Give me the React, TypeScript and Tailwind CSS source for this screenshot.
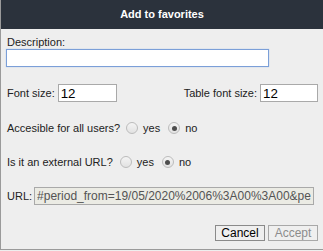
import React from 'react';

function Radio({ checked = false }: { checked?: boolean }) {
    return (
        <span className="flex h-[12px] w-[12px] items-center justify-center rounded-full border border-[#bcbcbc] bg-gradient-to-b from-[#f4f4f4] to-[#e2e2e2]">
            {checked && <span className="h-[5px] w-[5px] rounded-full bg-[#4d4d4d]" />}
        </span>
    );
}

function YesNo({ label, labelGap }: { label: string, labelGap: string }) {
    return (
        <div className="flex h-[18px] items-center">
            <span className="pl-px">{label}</span>
            <span className={`${labelGap} flex items-center`}>
                <Radio />
                <span className="ml-[5px]">yes</span>
            </span>
            <span className="ml-[8px] flex items-center">
                <Radio checked />
                <span className="ml-[5px]">no</span>
            </span>
        </div>
    );
}

export default function App() {
    const field = 'h-[18px] border border-[#a9a9a9] bg-white px-[2px] text-[13.33px] leading-[16px] text-black outline-none';

    return (
        <div className="h-[251px] w-[323px] overflow-hidden bg-[#eeeeee] font-['Liberation_Sans',Arial,sans-serif]">
            <div className="flex h-[250px] flex-col border-b border-l border-[#9a9a9a] bg-[#eeeeee] text-[11px] leading-[13px] text-[#222]">
                <div className="flex h-[29px] shrink-0 items-center justify-center bg-[#2b323c] text-[11px] font-bold text-white">
                    Add to favorites
                </div>

                <div className="flex flex-col px-[5px] pt-[7px]">
                    <label className="pl-px">Description:</label>
                    <input
                        className="h-[18px] w-[263px] border border-[#7b9fd8] bg-white px-[2px] text-[13.33px] shadow-[0_0_1px_#9fbbe6] outline-none"
                        defaultValue=""
                    />

                    <div className="mt-[17px] flex h-[18px] items-center justify-between">
                        <div className="flex items-center">
                            <span className="pl-px">Font size:</span>
                            <input className={`${field} ml-[3px] w-[59px]`} defaultValue="12" />
                        </div>
                        <div className="flex items-center">
                            <span>Table font size:</span>
                            <input className={`${field} ml-[3px] w-[58px]`} defaultValue="12" />
                        </div>
                    </div>

                    <div className="mt-[17px]">
                        <YesNo label="Accesible for all users?" labelGap="ml-[6px]" />
                    </div>
                    <div className="mt-[16px]">
                        <YesNo label="Is it an external URL?" labelGap="ml-[7px]" />
                    </div>

                    <div className="mt-[16px] flex h-[18px] items-center">
                        <span className="pl-px">URL:</span>
                        <input
                            className="ml-[2px] h-[18px] w-[280px] border border-[#a9a9a9] bg-[#ebebe4] px-[2px] text-[12px] leading-[16px] text-[#545454] outline-none"
                            defaultValue="#period_from=19/05/2020%2006%3A00%3A00&period_to=20/05/2020"
                            disabled
                        />
                    </div>

                    <div className="mt-[20px] flex justify-end gap-[3px]">
                        <button className="h-[16px] w-[50px] border border-[#8a8a8a] bg-[#efefef] text-[12px] leading-[14px] text-black">
                            Cancel
                        </button>
                        <button className="h-[16px] w-[50px] border border-[#a8a8a8] bg-[#efefef] text-[12px] leading-[14px] text-[#8c8c8c]" disabled>
                            Accept
                        </button>
                    </div>
                </div>
            </div>
        </div>
    );
}
